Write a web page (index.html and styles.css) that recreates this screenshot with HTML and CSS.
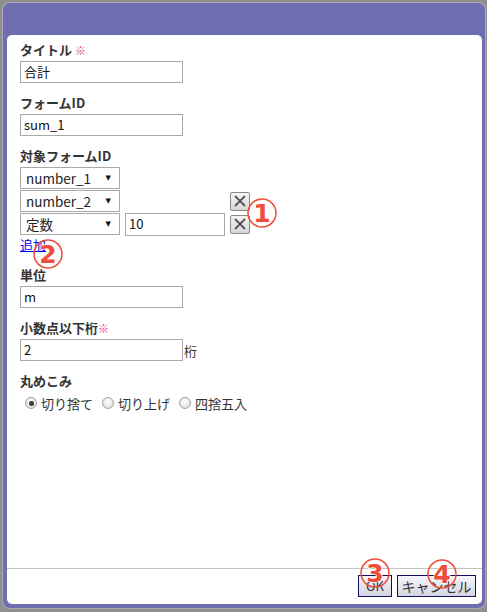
FILE: index.html
```html
<!DOCTYPE html>
<html lang="ja">
<head>
<meta charset="utf-8">
<title>合計</title>
<link rel="stylesheet" href="styles.css">
</head>
<body>
<div class="dialog">
  <div class="dialog-header"></div>
  <div class="panel">
    <div class="content">
      <div class="field">
        <div class="label">タイトル <span class="req">※</span></div>
        <div class="textbox">合計</div>
      </div>
      <div class="field">
        <div class="label">フォームID</div>
        <div class="textbox">sum_1</div>
      </div>
      <div class="field field-tight">
        <div class="label">対象フォームID</div>
        <div class="rows">
          <div class="select"><span>number_1</span><span class="arrow">▼</span></div>
          <div class="empty"></div>
          <div class="empty"></div>
          <div class="select"><span>number_2</span><span class="arrow">▼</span></div>
          <div class="empty"></div>
          <div class="xbtn"><svg width="12" height="12" viewBox="0 0 12 12"><path d="M1 1L11 11M11 1L1 11" stroke="#555" stroke-width="1.8" fill="none"/></svg></div>
          <div class="select"><span>定数</span><span class="arrow">▼</span></div>
          <div class="textbox small">10</div>
          <div class="xbtn"><svg width="12" height="12" viewBox="0 0 12 12"><path d="M1 1L11 11M11 1L1 11" stroke="#555" stroke-width="1.8" fill="none"/></svg></div>
        </div>
        <a class="add-link" href="#">追加</a>
      </div>
      <div class="field">
        <div class="label">単位</div>
        <div class="textbox">m</div>
      </div>
      <div class="field">
        <div class="label">小数点以下桁<span class="req">※</span></div>
        <div class="inline"><div class="textbox">2</div><span class="unit">桁</span></div>
      </div>
      <div class="field">
        <div class="label">丸めこみ</div>
        <div class="radios">
          <span class="radio checked"></span><span class="rlabel">切り捨て</span>
          <span class="radio"></span><span class="rlabel">切り上げ</span>
          <span class="radio"></span><span class="rlabel">四捨五入</span>
        </div>
      </div>
    </div>
    <div class="footer">
      <button class="btn btn-ok">OK</button>
      <button class="btn btn-cancel">キャンセル</button>
    </div>
  </div>
</div>

<svg class="mark mark1" width="32" height="32" viewBox="0 0 32 32"><circle cx="16" cy="16" r="14" fill="none" stroke="#ef4d3a" stroke-width="1.5"/><text x="16" y="25" text-anchor="middle">1</text></svg>
<svg class="mark mark2" width="32" height="32" viewBox="0 0 32 32"><circle cx="16" cy="16" r="14" fill="none" stroke="#ef4d3a" stroke-width="1.5"/><text x="16" y="25" text-anchor="middle">2</text></svg>
<svg class="mark mark3" width="32" height="32" viewBox="0 0 32 32"><circle cx="16" cy="16" r="14" fill="none" stroke="#ef4d3a" stroke-width="1.5"/><text x="16" y="25" text-anchor="middle">3</text></svg>
<svg class="mark mark4" width="32" height="32" viewBox="0 0 32 32"><circle cx="16" cy="16" r="14" fill="none" stroke="#ef4d3a" stroke-width="1.5"/><text x="16" y="25" text-anchor="middle">4</text></svg>
</body>
</html>
```
FILE: styles.css
```css
* { box-sizing: border-box; }
html, body { margin: 0; padding: 0; }
body {
  width: 487px;
  height: 612px;
  overflow: hidden;
  background: #8f8f8f;
  font-family: "Noto Sans CJK JP", "Noto Sans", sans-serif;
  font-size: 13px;
  color: #333;
}
.dialog {
  margin: 3px 2px 4px 3px;
  height: 605px;
  background: #6e6eb0;
  border-radius: 7px;
  padding: 0 3px 4px 4px;
  display: flex;
  flex-direction: column;
  box-shadow: 0 0 0 1px #a9a9b4;
}
.dialog-header { height: 32px; flex: none; }
.panel {
  flex: 1;
  background: #fff;
  border-radius: 5px;
  display: flex;
  flex-direction: column;
}
.content {
  flex: 1;
  padding: 6px 0 0 13px;
}
.field { margin-bottom: 11px; }
.label {
  font-weight: bold;
  line-height: 18px;
  height: 18px;
  margin-bottom: 2px;
  color: #333;
}
.req { color: #e0408a; font-weight: normal; font-size: 11px; }
.textbox {
  width: 163px;
  height: 22px;
  border: 1px solid #a9a9a9;
  padding: 0 3px;
  line-height: 20px;
  color: #111;
  background: #fff;
}
.textbox.small { width: 100px; }
.rows {
  display: grid;
  grid-template-columns: 100px 100px 20px;
  grid-auto-rows: 22px;
  column-gap: 5px;
  row-gap: 1px;
  align-items: center;
}
.rows .textbox { height: 23px; }
.select {
  height: 22px;
  border: 1px solid #a9a9a9;
  display: flex;
  justify-content: space-between;
  align-items: center;
  padding: 0 8px 0 5px;
  color: #222;
  background: #fff;
  font-size: 13.5px;
}
.arrow { font-family: "DejaVu Sans", sans-serif; font-size: 7px; color: #111; }
.xbtn {
  width: 20px;
  height: 19px;
  border: 1px solid #8a8a8a;
  border-radius: 2px;
  background: linear-gradient(#f4f4f4, #d6d6d6);
  display: flex;
  align-items: center;
  justify-content: center;
}
.add-link {
  display: inline-block;
  margin-top: 2px;
  line-height: 16px;
  color: #0000ee;
  text-decoration: underline;
  margin-bottom: 2px;
}
.field-tight { margin-bottom: 11px; }
.inline { display: flex; align-items: center; }
.unit { margin-left: 1px; color: #333; }
.radios {
  display: flex;
  align-items: center;
  height: 22px;
  padding-left: 5px;
  color: #333;
}
.radio {
  width: 12px;
  height: 12px;
  border-radius: 50%;
  border: 1px solid #a3a3a3;
  background: radial-gradient(circle at 50% 40%, #fdfdfd, #d9d9d9);
  display: inline-flex;
  align-items: center;
  justify-content: center;
  margin-right: 4px;
}
.radio.checked::after {
  content: "";
  width: 5px;
  height: 5px;
  border-radius: 50%;
  background: #3a3a3a;
}
.rlabel { margin-right: 9px; }
.footer {
  flex: none;
  border-top: 1px solid #c4c4c4;
  padding: 6px 6px 7px 0;
  display: flex;
  justify-content: flex-end;
  gap: 5px;
}
.btn {
  height: 22px;
  border: 1px solid #101060;
  background: linear-gradient(#f6f6fa, #d4d4e2);
  font-family: "Noto Sans CJK JP", "Noto Sans", sans-serif;
  font-size: 13px;
  color: #333;
  padding: 0;
  line-height: 20px;
  border-radius: 0;
}
.btn-ok { width: 34px; }
.btn-cancel { width: 79px; font-size: 14px; }
.mark {
  position: absolute;
}
.mark text {
  font-family: "DejaVu Sans", sans-serif;
  font-weight: bold;
  font-size: 25px;
  fill: #ef4d3a;
  stroke: #fff;
  stroke-width: 1.5px;
  paint-order: stroke;
}
.mark1 { left: 246px; top: 197px; }
.mark2 { left: 32px; top: 238px; }
.mark3 { left: 359px; top: 557px; }
.mark4 { left: 426px; top: 558px; }
```
